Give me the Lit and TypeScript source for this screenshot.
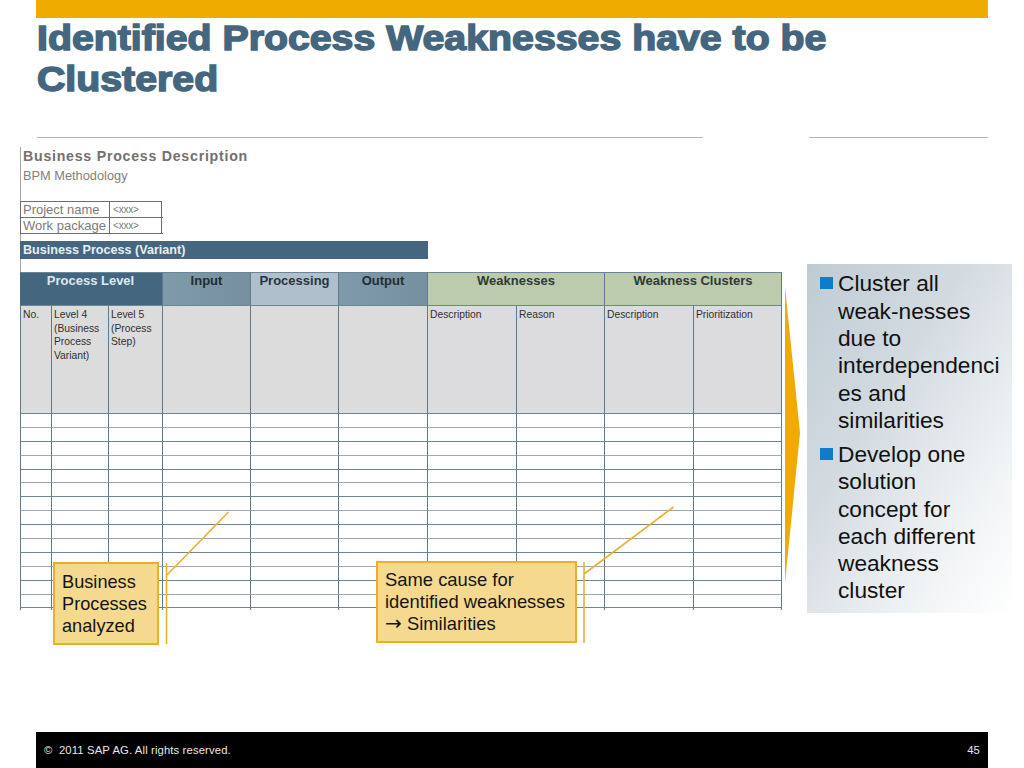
import { LitElement, html, css, svg } from "lit";
import { customElement } from "lit/decorators.js";

const COLS = [31, 57, 54, 88, 88, 89, 89, 88, 89, 89];
const ROWS = 14;

@customElement("app-root")
export class AppRoot extends LitElement {
  static styles = css`
    :host { display: block; width: 1024px; height: 768px; overflow: hidden; background: #fff; font-family: "Liberation Sans", Arial, sans-serif; }
    .slide { width: 1024px; height: 768px; display: flex; flex-direction: column; position: relative; }
    .bar { height: 18px; width: 952px; margin-left: 36px; background: #f0ab00; flex: none; }
    .head { height: 119px; flex: none; padding-left: 37px; }
    h1 { margin: -1px 0 0; width: 800px; transform: scaleX(1.122); transform-origin: 0 0;
      font-size: 35px; line-height: 41px; font-weight: 700; color: #44677f; white-space: nowrap;
      -webkit-text-stroke: 1.5px #44677f; }
    .rules { display: flex; flex: none; height: 1px; margin: 0 36px 0 37px; gap: 106px; }
    .rules i { display: block; height: 1px; background: #b4b4b4; }
    .rules i:first-child { width: 666px; }
    .rules i:last-child { flex: 1; }
    .main { display: flex; flex: 1; margin-top: 9px; position: relative; align-items: flex-start; }
    .sheet { margin-left: 20px; width: 763px; flex: none; display: flex; flex-direction: column; }
    .top { border-left: 1px solid #a9a9a9; height: 125px; box-sizing: border-box; display: flex; flex-direction: column; }
    .t1 { font-size: 14.2px; line-height: 18px; font-weight: 700; color: #75706e; margin-left: 2px; letter-spacing: 0.74px; }
    .t2 { font-size: 12.8px; line-height: 14px; color: #7f7f7f; margin: 4px 0 0 2px; }
    .meta { display: grid; grid-template-columns: 88px 54px; width: 142px; margin: 18px 0 0 -1px; border: 1px solid #6e6e6e; border-width: 1px 1px 0 1px; box-sizing: border-box; }
    .meta div { height: 16px; box-sizing: border-box; border-bottom: 1px solid #6e6e6e; font-size: 13px; line-height: 15px; color: #7c7c7c; padding-left: 2px; white-space: nowrap; overflow: hidden; }
    .meta div:nth-child(even) { border-left: 1px solid #6e6e6e; font-size: 10px; padding-left: 3px; letter-spacing: -0.2px; }
    .variant { width: 408px; height: 18px; margin: 7px 0 0 -1px; background: #44677f; color: #e8eef2; font-size: 12.6px; font-weight: 700; line-height: 18px; padding-left: 3px; box-sizing: border-box; flex: none; }
    .table { display: grid; grid-template-rows: 34px 108px; grid-auto-rows: 13.9px; }
    .c { box-sizing: border-box; border-left: 1px solid #5f7a8c; border-bottom: 1px solid #6c8698; }
    .c.alt { border-bottom-color: #9aa9b4; }
    .c.edge { border-right: 1px solid #5f7a8c; }
    .h { font-size: 13px; font-weight: 700; text-align: center; line-height: 16px; color: #2f3a34; border-top: 1px solid #6c8698; }
    .h.lv { grid-column: span 3; background: #44677f; color: #dfe8ee; border-left-color: #44677f; padding-right: 2px; }
    .h.in { background: linear-gradient(90deg, #7f9aaa, #76909f); color: #222d33; }
    .h.pr { background: #afc0cc; color: #2b343a; }
    .h.we { grid-column: span 2; background: #bccbae; }
    .s { background: #dcdcdc; font-size: 10.3px; line-height: 13.7px; color: #303030; padding: 2px 0 0 2px; white-space: nowrap; overflow: hidden; }
    .s.w { background: #dcdcde; }
    .tail { height: 2px; border-left: 1px solid #5f7a8c; box-sizing: border-box; }
    .tail.edge { border-right: 1px solid #5f7a8c; }
    .arrow { display: block; flex: none; margin: 140px 0 0 2px; }
    .panel { flex: none; width: 205px; height: 349px; margin: 117px 0 0 7px; box-sizing: border-box; padding: 6.4px 0 0 13px;
      background: linear-gradient(122deg, #bfcbd4 0%, #d3dbe1 38%, #eef1f3 72%, #ffffff 100%);
      font-size: 22.7px; line-height: 27.3px; color: #111; }
    .p { display: flex; margin-bottom: 6.8px; }
    .sq { width: 13px; height: 12px; background: #0f7ccb; flex: none; margin: 7px 5px 0 0; }
    .call { position: absolute; box-sizing: border-box; background: #f5d98f; border: 2px solid #ebb02a; font-size: 18.2px; line-height: 22.2px; color: #151515; white-space: nowrap; }
    .c1 { left: 53px; top: 415px; width: 106px; height: 83px; padding: 7px 0 0 7px; }
    .c2 { left: 376px; top: 414px; width: 201px; height: 82px; padding: 6px 0 0 7px; font-size: 18.4px; }
    .ar { font-family: "DejaVu Sans", sans-serif; font-size: 20px; line-height: 0; }
    .leaders { position: absolute; left: 0; top: 0; pointer-events: none; }
    footer { flex: none; height: 36px; width: 952px; margin-left: 36px; background: #000; color: #e8e8e8; font-size: 11.3px; line-height: 37px; display: flex; justify-content: space-between; padding: 0 8px; box-sizing: border-box; letter-spacing: 0.12px; }
  `;

  private head(label: string, cls: string) {
    return html`<div class="c h ${cls}">${label}</div>`;
  }

  private sub(lines: string[], cls = "") {
    return html`<div class="c s ${cls}">${lines.map((l) => html`${l}<br />`)}</div>`;
  }

  render() {
    const rows = Array.from({ length: ROWS });
    return html`
      <div class="slide">
        <div class="bar"></div>
        <div class="head"><h1>Identified Process Weaknesses have to be<br />Clustered</h1></div>
        <div class="rules"><i></i><i></i></div>
        <div class="main">
          <div class="sheet">
            <div class="top">
              <div class="t1">Business Process Description</div>
              <div class="t2">BPM Methodology</div>
              <div class="meta">
                <div>Project name</div><div>&lt;xxx&gt;</div>
                <div>Work package</div><div>&lt;xxx&gt;</div>
              </div>
              <div class="variant">Business Process (Variant)</div>
            </div>
            <div class="table" style="grid-template-columns:${COLS.map((c) => c + "px").join(" ")}">
              ${this.head("Process Level", "lv")}
              ${this.head("Input", "in")}
              ${this.head("Processing", "pr")}
              ${this.head("Output", "in")}
              ${this.head("Weaknesses", "we")}
              ${this.head("Weakness Clusters", "we edge")}
              ${this.sub(["No."])}
              ${this.sub(["Level 4", "(Business", "Process", "Variant)"])}
              ${this.sub(["Level 5", "(Process", "Step)"])}
              ${this.sub([])}${this.sub([])}${this.sub([])}
              ${this.sub(["Description"], "w")}
              ${this.sub(["Reason"], "w")}
              ${this.sub(["Description"], "w")}
              ${this.sub(["Prioritization"], "w edge")}
              ${rows.map((_, r) =>
                COLS.map(
                  (_c, i) =>
                    html`<div class="c ${r % 2 === 0 ? "alt" : ""} ${i === COLS.length - 1 ? "edge" : ""}"></div>`
                )
              )}
              ${COLS.map((_c, i) => html`<div class="tail ${i === COLS.length - 1 ? "edge" : ""}"></div>`)}
            </div>
          </div>
          <svg class="arrow" width="15" height="297" viewBox="0 0 15 297"><polygon points="0,0 15,146 0,296" fill="#f0ab00" /></svg>
          <div class="panel">
            <div class="p"><span class="sq"></span><span>Cluster all<br />weak-nesses<br />due to<br />interdependenci<br />es and<br />similarities</span></div>
            <div class="p"><span class="sq"></span><span>Develop one<br />solution<br />concept for<br />each different<br />weakness<br />cluster</span></div>
          </div>
          <svg class="leaders" width="1024" height="585" viewBox="0 147 1024 585">
            ${svg`
              <g stroke="#ebb02a" fill="none">
                <path stroke-width="1.6" d="M166.500 563V644M167 575L228.500 512" />
                <path stroke-width="1.6" d="M584 562V643M584 574L673.500 507" />
              </g>`}
          </svg>
          <div class="call c1">Business<br />Processes<br />analyzed</div>
          <div class="call c2">Same cause for<br />identified weaknesses<br /><span class="ar">→</span> Similarities</div>
        </div>
        <footer><span>©&nbsp; 2011 SAP AG. All rights reserved.</span><span>45</span></footer>
      </div>
    `;
  }
}
